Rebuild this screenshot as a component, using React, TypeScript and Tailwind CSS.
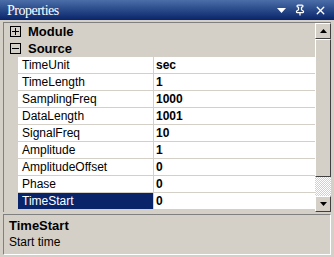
import { Pin, X } from 'lucide-react';

const rows: [string, string][] = [
  ['TimeUnit', 'sec'],
  ['TimeLength', '1'],
  ['SamplingFreq', '1000'],
  ['DataLength', '1001'],
  ['SignalFreq', '10'],
  ['Amplitude', '1'],
  ['AmplitudeOffset', '0'],
  ['Phase', '0'],
  ['TimeStart', '0'],
];

function Box({ plus }: { plus?: boolean }) {
  return (
    <div className="relative w-[11px] h-[11px] border border-black bg-[#d4d0c8] mx-[6px]">
      <div className="absolute left-[1px] top-[4px] w-[7px] h-[1px] bg-black" />
      {plus && <div className="absolute left-[4px] top-[1px] w-[1px] h-[7px] bg-black" />}
    </div>
  );
}

function Category({ label, plus }: { label: string; plus?: boolean }) {
  return (
    <div className="flex items-center h-[17px]">
      <Box plus={plus} />
      <span className="font-bold text-[13px] pl-[1px]">{label}</span>
    </div>
  );
}

function Arrow({ up }: { up?: boolean }) {
  return (
    <div className="w-[16px] h-[16px] bg-[#d4d0c8] border border-t-white border-l-white border-r-[#404040] border-b-[#404040] flex items-center justify-center">
      <svg width="7" height="4" viewBox="0 0 7 4">
        <path d={up ? 'M3.5 0 L7 4 L0 4 Z' : 'M0 0 L7 0 L3.5 4 Z'} fill="black" />
      </svg>
    </div>
  );
}

export default function App() {
  return (
    <div
      className="w-[334px] h-[257px] bg-[#d4d0c8] flex flex-col text-black"
      style={{ fontFamily: '"Liberation Sans", Arial, sans-serif' }}
    >
      <div className="h-[20px] flex items-center justify-between bg-gradient-to-b from-[#4b6ea8] to-[#0a246a] px-[7px]">
        <span className="text-white text-[14px] tracking-[-0.5px]" style={{ fontFamily: '"Liberation Serif", serif' }}>
          Properties
        </span>
        <div className="flex items-center gap-[8px] text-white">
          <svg width="9" height="5" viewBox="0 0 9 5">
            <path d="M0 0 L9 0 L4.5 5 Z" fill="white" />
          </svg>
          <Pin size={12} strokeWidth={2.5} />
          <X size={13} strokeWidth={2.5} />
        </div>
      </div>
      <div className="px-[3px] pt-[2px]">
        <div className="flex border-t border-l border-[#808080] h-[190px]">
          <div className="flex-1 flex flex-col">
            <Category label="Module" plus />
            <Category label="Source" />
            {rows.map(([k, v]) => {
              const sel = k === 'TimeStart';
              return (
                <div key={k} className="flex h-[17px]">
                  <div className="w-[14px] shrink-0" />
                  <div
                    className={`w-[136px] shrink-0 text-[12px] pl-[4px] leading-[16px] border-b border-r border-[#d4d0c8] ${
                      sel ? 'bg-[#0a246a] text-white' : 'bg-white'
                    }`}
                  >
                    {k}
                  </div>
                  <div className="flex-1 bg-white font-bold text-[12px] pl-[2px] leading-[16px] border-b border-[#d4d0c8]">
                    {v}
                  </div>
                </div>
              );
            })}
          </div>
          <div className="w-[16px] flex flex-col">
            <Arrow up />
            <div className="h-[138px] bg-[#d4d0c8] border border-t-white border-l-white border-r-[#404040] border-b-[#404040]" />
            <div
              className="flex-1"
              style={{
                backgroundImage:
                  'repeating-conic-gradient(#d4d0c8 0% 25%, #ffffff 0% 50%)',
                backgroundSize: '2px 2px',
              }}
            />
            <Arrow />
          </div>
        </div>
      </div>
      <div className="mx-[3px] mt-[2px] h-[41px] border border-t-[#808080] border-l-[#808080] border-r-white border-b-white px-[5px] pt-[3px]">
        <div className="font-bold text-[13px] leading-[15px]">TimeStart</div>
        <div className="text-[12px] leading-[15px] pt-[2px]">Start time</div>
      </div>
    </div>
  );
}
